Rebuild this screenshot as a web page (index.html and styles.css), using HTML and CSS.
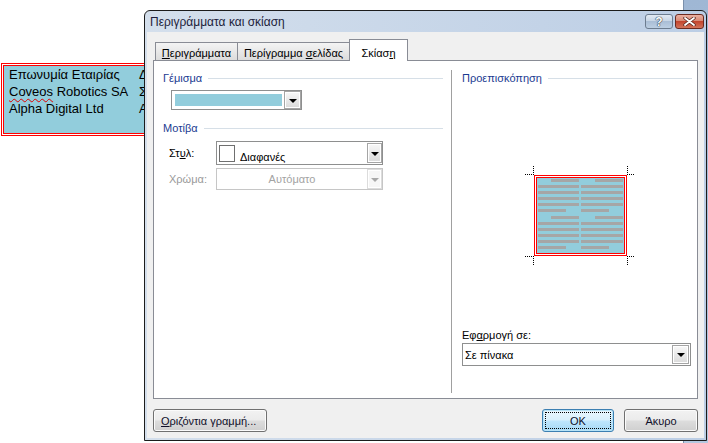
FILE: index.html
```html
<!DOCTYPE html>
<html lang="el">
<head>
  <meta charset="UTF-8" />
  <title>Περιγράμματα και σκίαση</title>
  <link rel="stylesheet" href="styles.css">
</head>
<body>
  <!-- document behind the dialog: table with a red double border -->
  <div class="doc">
    <div class="doc-line">
      <div class="doc-space">
        <div class="doc-line">
          <table class="doc-table">
            <tr><td>Επωνυμία Εταιρίας</td><td>Δ</td></tr>
            <tr><td><span class="spell">Coveos</span> Robotics SA</td><td>Σ</td></tr>
            <tr><td>Alpha Digital Ltd</td><td>Α</td></tr>
            <tr class="doc-gap"><td></td><td></td></tr>
          </table>
        </div>
      </div>
    </div>
  </div>

  <div class="back-window"></div>

  <div class="dialog">
    <div class="titlebar">
      <span class="title">Περιγράμματα και σκίαση</span>
      <div class="caption-buttons">
        <button class="cap help">?</button>
        <button class="cap close">
          <svg width="13" height="9" viewBox="0 0 13 9">
            <path d="M2 1 L11 8 M11 1 L2 8" stroke="#5a2a22" stroke-width="3.4" stroke-linecap="round"/>
            <path d="M2 1 L11 8 M11 1 L2 8" stroke="#fff" stroke-width="1.8" stroke-linecap="round"/>
          </svg>
        </button>
      </div>
    </div>

    <div class="client">
      <div class="tabs">
        <div class="tab tab-borders"><u>Π</u>εριγράμματα</div>
        <div class="tab tab-page">Περίγραμμα <u>σ</u>ελίδας</div>
        <div class="tab tab-shading active">Σκίασ<u>η</u></div>
      </div>

      <div class="panel">
        <div class="col-left">
          <div class="group-title">Γέμισμα</div>
          <div class="combo fill-combo">
            <span class="fill-swatch"></span>
            <span class="drop"><i></i></span>
          </div>

          <div class="group-title pattern-title">Μοτίβα</div>
          <div class="field-row">
            <label>Στ<u>υ</u>λ:</label>
            <div class="combo style-combo">
              <span class="style-swatch"></span>
              <span class="combo-text">Διαφανές</span>
              <span class="drop"><i></i></span>
            </div>
          </div>
          <div class="field-row color-row">
            <label class="disabled">Χρώμα:</label>
            <div class="combo color-combo">
              <span class="combo-text center">Αυτόματο</span>
              <span class="drop disabled"><i></i></span>
            </div>
          </div>
        </div>

        <div class="vsep"></div>

        <div class="col-right">
          <div class="group-title">Προεπισκόπηση</div>

          <svg class="preview" width="112" height="102" viewBox="0 0 112 102">
            <g stroke="#000" stroke-width="1" stroke-dasharray="1 1" fill="none">
              <path d="M1 10.5 H10 M9.5 2 V11"/>
              <path d="M103 10.5 H111 M103.5 2 V11"/>
              <path d="M1 92.5 H10 M9.5 92 V101"/>
              <path d="M103 92.5 H111 M103.5 92 V101"/>
            </g>
            <rect x="13" y="14" width="87" height="75" fill="#92cddc"/>
            <rect x="10.5" y="11.5" width="92" height="80" fill="none" stroke="#ff0000"/>
            <rect x="12.5" y="13.5" width="88" height="76" fill="none" stroke="#ff0000"/>
            <g fill="#a6a6a6">
              <rect x="27" y="15" width="28" height="3"/><rect x="71" y="15" width="28" height="3"/>
              <rect x="14" y="21" width="41" height="3"/><rect x="57" y="21" width="42" height="3"/>
              <rect x="14" y="27" width="41" height="3"/><rect x="57" y="27" width="42" height="3"/>
              <rect x="14" y="33" width="41" height="3"/><rect x="57" y="33" width="42" height="3"/>
              <rect x="14" y="39" width="41" height="3"/><rect x="57" y="39" width="42" height="3"/>
              <rect x="14" y="45" width="28" height="3"/><rect x="57" y="45" width="28" height="3"/>
              <rect x="27" y="52" width="28" height="3"/><rect x="71" y="52" width="28" height="3"/>
              <rect x="14" y="58" width="41" height="3"/><rect x="57" y="58" width="42" height="3"/>
              <rect x="14" y="64" width="41" height="3"/><rect x="57" y="64" width="42" height="3"/>
              <rect x="14" y="70" width="41" height="3"/><rect x="57" y="70" width="42" height="3"/>
              <rect x="14" y="76" width="41" height="3"/><rect x="57" y="76" width="42" height="3"/>
              <rect x="14" y="82" width="28" height="3"/><rect x="57" y="82" width="28" height="3"/>
            </g>
          </svg>

          <div class="apply-label">Εφ<u>α</u>ρμογή σε:</div>
          <div class="combo apply-combo">
            <span class="combo-text">Σε πίνακα</span>
            <span class="drop"><i></i></span>
          </div>
        </div>
      </div>

      <div class="buttons">
        <button class="btn btn-line"><u>Ο</u>ριζόντια γραμμή...</button>
        <button class="btn btn-ok">OK</button>
        <button class="btn btn-cancel">Άκυρο</button>
      </div>
    </div>
  </div>
</body>
</html>
```

FILE: styles.css
```css
* {
  box-sizing: border-box;
}
body {
  margin: 0;
  width: 708px;
  height: 443px;
  overflow: hidden;
  position: relative;
  background: #fff;
  font-family: "Liberation Sans", Arial, sans-serif;
}

/* document */
.doc {
  width: 222px;
  padding: 63px 0 0 1px;
}
.doc-line {
  background: #ff0000;
  padding: 1px;
}
.doc-space {
  background: #fff;
  padding: 1px;
}
.doc-table {
  width: 100%;
  border-collapse: collapse;
  background: #92cddc;
  font-size: 13px;
  line-height: 17px;
  color: #000;
  white-space: nowrap;
}
.doc-table td {
  padding: 0;
  vertical-align: top;
}
.doc-table td:first-child {
  width: 135px;
  padding-left: 5px;
}
.doc-gap td {
  height: 16px;
}
.spell {
  text-decoration: underline wavy #e00000;
  text-decoration-thickness: 1px;
  text-underline-offset: 2px;
}
.back-window {
  position: absolute;
  left: 683px;
  top: 0;
  width: 25px;
  height: 443px;
  background: linear-gradient(#9fb7d4, #b4c8e0);
  border-left: 1px solid #7b90ab;
}

/* dialog window */
.dialog {
  position: absolute;
  left: 144px;
  top: 10px;
  width: 563px;
  height: 431px;
  border: 1px solid #1c1c1c;
  border-radius: 6px 6px 0 0;
  background: linear-gradient(to right, #d4dfec, #bccee5);
  display: flex;
  flex-direction: column;
}
.titlebar {
  height: 21px;
  display: flex;
  justify-content: space-between;
  align-items: flex-start;
  padding: 0 2px 0 5px;
}
.title {
  font-size: 12px;
  line-height: 21px;
  padding-top: 1px;
  color: #1d1d3b;
}
.caption-buttons {
  display: flex;
  gap: 2px;
  padding-top: 3px;
}
.cap {
  height: 15px;
  padding: 0;
  border-radius: 3px;
  display: flex;
  align-items: center;
  justify-content: center;
}
.help {
  width: 28px;
  border: 1px solid #6c7c8f;
  background: linear-gradient(#e2eaf3 0%, #c8d6e6 45%, #aabed6 50%, #bccee2 100%);
  color: #fff;
  font: bold 12px "Liberation Sans", Arial, sans-serif;
  text-shadow: 0 0 1px #2e3b4c, 0 0 1px #2e3b4c, 0 0 1px #2e3b4c;
}
.close {
  width: 29px;
  border: 1px solid #6b2a20;
  background: linear-gradient(#eab0a2 0%, #d98a76 45%, #c3452e 50%, #d2735a 100%);
}

.client {
  flex: 1;
  margin: 0 2px 2px;
  background: #f0f0f0;
  padding: 7px 6px 0;
  font-size: 11px;
  color: #000;
}

/* tabs */
.tabs {
  display: flex;
  align-items: flex-end;
  height: 21px;
  padding-left: 2px;
  position: relative;
  z-index: 1;
}
.tab {
  height: 18px;
  border: 1px solid #898c95;
  border-bottom: none;
  background: linear-gradient(#f4f4f4, #dcdcdc);
  margin-right: -1px;
  text-align: center;
  padding-top: 2px;
  line-height: 16px;
}
.tab-borders { width: 83px; }
.tab-page { width: 113px; }
.tab-shading { width: 59px; }
.tab.active {
  height: 22px;
  margin-bottom: -1px;
  background: #fff;
  padding-top: 5px;
}

.panel {
  height: 339px;
  border: 1px solid #898c95;
  background: #fff;
  display: flex;
}
.col-left {
  width: 297px;
  padding: 10px 8px 0 9px;
}
.vsep {
  width: 1px;
  margin: 9px 0 5px;
  background: #a0a0a0;
}
.col-right {
  flex: 1;
  padding: 10px 5px 0 10px;
}
.group-title {
  display: flex;
  align-items: center;
  gap: 6px;
  line-height: 14px;
  color: #1b3b91;
}
.group-title::after {
  content: "";
  flex: 1;
  border-top: 1px solid #d6dfe7;
}
.pattern-title {
  margin-top: 11px;
}

/* combo boxes */
.combo {
  border: 1px solid #8e8f8f;
  background: #fff;
  display: flex;
  align-items: center;
}
.drop {
  margin-left: auto;
  width: 17px;
  height: 18px;
  border: 1px solid #a5a5a5;
  background: linear-gradient(#f8f8f8, #dadada);
  box-shadow: inset 0 0 0 1px #fff;
  display: flex;
  align-items: center;
  justify-content: center;
}
.drop i {
  width: 0;
  height: 0;
  border-left: 4px solid transparent;
  border-right: 4px solid transparent;
  border-top: 4px solid #000;
  margin-top: 1px;
}
.drop.disabled {
  border-color: #dcdcdc;
  background: #f6f6f6;
}
.drop.disabled i {
  border-top-color: #a8a8a8;
}
.fill-combo {
  width: 131px;
  height: 20px;
  margin: 5px 0 0 8px;
}
.fill-swatch {
  width: 107px;
  height: 12px;
  margin-left: 3px;
  background: #92cddc;
}
.field-row {
  display: flex;
  align-items: center;
  padding-left: 6px;
  margin-top: 6px;
}
.field-row label {
  width: 47px;
}
.field-row label.disabled {
  color: #9a9a9a;
}
.color-row {
  margin-top: 3px;
}
.style-combo {
  width: 167px;
  height: 24px;
}
.style-combo .drop {
  width: 15px;
  height: 20px;
}
.style-swatch {
  width: 16px;
  height: 17px;
  margin-left: 2px;
  border: 1px solid #6f6f6f;
  background: #fff;
}
.style-combo .combo-text {
  align-self: flex-start;
  margin: 8px 0 0 5px;
  line-height: 14px;
}
.color-combo {
  width: 167px;
  height: 22px;
  border-color: #c6c6c6;
}
.color-combo .drop {
  width: 15px;
  height: 20px;
}
.combo-text.center {
  flex: 1;
  text-align: center;
  color: #a3a3a3;
}

.preview {
  display: block;
  margin: 79px 0 0 62px;
}
.apply-label {
  margin-top: 62px;
  line-height: 14px;
}
.apply-combo {
  margin-top: 1px;
  width: 229px;
  height: 23px;
}
.apply-combo .combo-text {
  padding-left: 2px;
}
.apply-combo .drop {
  width: 17px;
  height: 19px;
  margin-right: 1px;
}

/* buttons */
.buttons {
  display: flex;
  margin-top: 10px;
}
.btn {
  height: 23px;
  padding: 0;
  border: 1px solid #707070;
  border-radius: 3px;
  background: linear-gradient(#f2f2f2 0%, #ebebeb 48%, #dddddd 52%, #cfcfcf 100%);
  box-shadow: inset 0 0 0 1px #fbfbfb;
  font: 11px "Liberation Sans", Arial, sans-serif;
  color: #10102a;
}
.btn-line {
  width: 114px;
  text-align: left;
  padding-left: 7px;
}
.btn-ok {
  margin-left: auto;
  width: 72px;
  border-color: #3c7fb1;
  box-shadow: inset 0 0 0 1px #b7e3f7;
  background: linear-gradient(#eaf6fd 0%, #d9f0fc 48%, #bee6fd 52%, #a7d9f5 100%);
  outline: 1px dotted #000;
  outline-offset: -4px;
}
.btn-cancel {
  margin-left: 10px;
  width: 74px;
}
```
